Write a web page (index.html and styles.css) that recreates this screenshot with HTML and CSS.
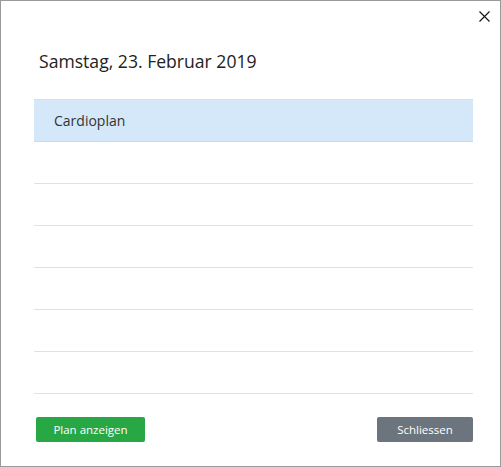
FILE: index.html
```html
<!DOCTYPE html>
<html>
<head>
<meta charset="utf-8">
<link rel="stylesheet" href="styles.css">
</head>
<body>
<div class="dialog">
  <div class="topbar">
    <button class="close" aria-label="Close">
      <svg width="11" height="11" viewBox="0 0 11 11"><path d="M0.5 0.5 L10.5 10.5 M10.5 0.5 L0.5 10.5" stroke="#111" stroke-width="1.1" fill="none"/></svg>
    </button>
  </div>
  <div class="content">
    <h1 class="title">Samstag, 23. Februar 2019</h1>
    <div class="list">
      <div class="row selected">Cardioplan</div>
      <div class="row"></div>
      <div class="row"></div>
      <div class="row"></div>
      <div class="row"></div>
      <div class="row"></div>
      <div class="row"></div>
    </div>
    <div class="actions">
      <button class="btn btn-green">Plan anzeigen</button>
      <button class="btn btn-gray">Schliessen</button>
    </div>
  </div>
</div>
</body>
</html>
```
FILE: styles.css
```css
html, body {
  margin: 0;
  padding: 0;
  background: #fff;
}
.dialog {
  box-sizing: border-box;
  width: 501px;
  height: 467px;
  border: 1px solid #9a9a9a;
  font-family: "Open Sans", "Noto Sans", sans-serif;
  color: #333;
}
.topbar {
  display: flex;
  justify-content: flex-end;
  height: 40px;
}
.close {
  background: none;
  border: none;
  padding: 0;
  margin: 9px 9px 0 0;
  width: 13px;
  height: 13px;
  display: flex;
  align-items: center;
  justify-content: center;
}
.content {
  padding: 0 27px 0 33px;
}
.title {
  margin: 0;
  font-weight: 400;
  font-size: 17.6px;
  line-height: 24px;
  padding-left: 5px;
  color: #222;
  height: 58px;
  padding-top: 8px;
  box-sizing: border-box;
}
.list {
  border-top: 1px solid #d3e0ea;
}
.row {
  height: 41px;
  border-bottom: 1px solid #dee2e6;
  box-sizing: content-box;
  display: flex;
  align-items: center;
  padding-left: 20px;
  font-size: 14px;
  color: #333;
}
.row.selected {
  background: #d4e8f9;
  border-bottom-color: #c9d9e6;
}
.actions {
  display: flex;
  justify-content: space-between;
  padding: 23px 0 0 2px;
}
.btn {
  border: none;
  border-radius: 2px;
  height: 25px;
  font-family: "Open Sans", "Noto Sans", sans-serif;
  font-size: 11.5px;
  color: #fff;
  padding: 0;
  cursor: pointer;
}
.btn-green {
  background: #28a745;
  width: 109px;
}
.btn-gray {
  background: #6c757d;
  width: 96px;
}
```
